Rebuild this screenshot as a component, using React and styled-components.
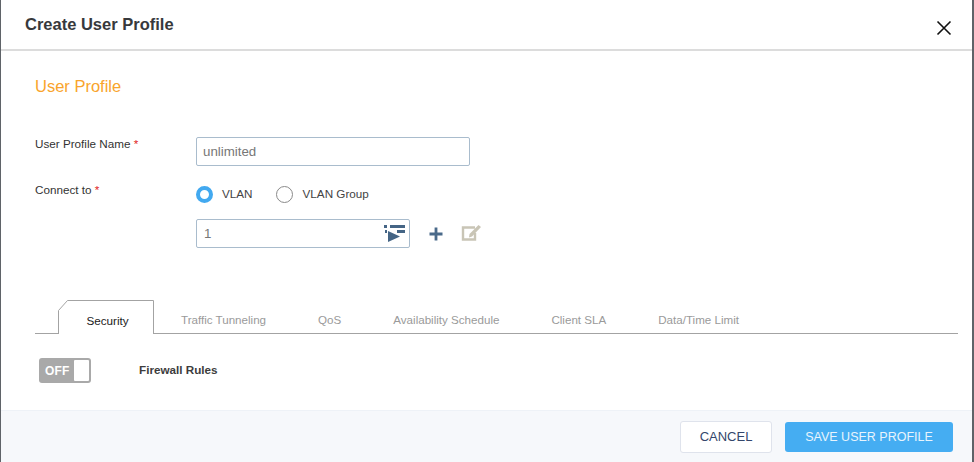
import React from "react";
import styled, { createGlobalStyle } from "styled-components";

const GlobalStyle = createGlobalStyle`
  html, body {
    margin: 0;
    padding: 0;
    background: #5f6368;
  }
  body {
    font-family: "Liberation Sans", Arial, sans-serif;
  }
`;

const Dialog = styled.div`
  width: 971px;
  height: 462px;
  margin-left: 1px;
  background: #fff;
  display: flex;
  flex-direction: column;
  overflow: hidden;
`;

const Header = styled.header`
  box-sizing: border-box;
  height: 51px;
  flex: none;
  border-bottom: 2px solid #dcdcdc;
  display: flex;
  align-items: center;
  justify-content: space-between;
  padding: 0 19px 0 24px;
`;

const Title = styled.h1`
  margin: 0;
  font-size: 16.5px;
  font-weight: 700;
  color: #37393c;
`;

const CloseButton = styled.button`
  border: none;
  background: none;
  padding: 0;
  width: 18px;
  height: 18px;
  margin-top: 6px;
  color: #111;
`;

const Body = styled.main`
  flex: 1;
  padding: 26px 0 0 34px;
`;

const SectionTitle = styled.h2`
  margin: 0 0 42px;
  font-size: 16.5px;
  line-height: 18px;
  font-weight: 400;
  color: #f9a42c;
`;

const Row = styled.div`
  display: flex;
  align-items: ${({ $top }) => ($top ? "flex-start" : "center")};
  margin-bottom: ${({ $gap }) => $gap || 0}px;
  padding-left: ${({ $indent }) => $indent || 0}px;
`;

const Label = styled.label`
  width: 161px;
  font-size: 11.7px;
  line-height: 14px;
  color: #333;
  flex: none;

  b {
    color: #e02020;
    font-weight: 400;
  }
`;

const TextInput = styled.div`
  position: relative;
  box-sizing: border-box;
  width: ${({ $w }) => $w}px;
  height: 29px;
  border: 1px solid #a9bccd;
  border-radius: 2px;
  padding-left: ${({ $pad }) => $pad}px;
  font-size: 13.3px;
  line-height: 27px;
  color: #777;
`;

const RadioGroup = styled.div`
  display: flex;
  align-items: center;
  margin-top: 3px;
  font-size: 11.7px;
  color: #444;
`;

const Radio = styled.span`
  box-sizing: border-box;
  width: 17px;
  height: 17px;
  border-radius: 50%;
  flex: none;
  margin-right: ${({ $on }) => ($on ? 9 : 10)}px;
  background: #fff;
  border: ${({ $on }) => ($on ? "4.5px solid #42a9f0" : "1px solid #8a8a8a")};
`;

const RadioText = styled.span`
  margin-right: ${({ $last }) => ($last ? 0 : 23)}px;
  padding-bottom: 2px;
`;

const ListIcon = styled.svg`
  position: absolute;
  right: 4px;
  top: 5px;
`;

const IconSlot = styled.span`
  display: flex;
  margin-left: ${({ $ml }) => $ml}px;
  margin-top: ${({ $mt }) => $mt || 0}px;
`;

const Tabs = styled.nav`
  display: flex;
  align-items: flex-end;
  height: 33px;
  margin-right: 14px;
  border-bottom: 1px solid #a3a3a3;
  padding-left: 23px;
`;

const ActiveTab = styled.div`
  position: relative;
  width: 96px;
  height: 34px;
  margin-bottom: -1px;
  margin-right: 27px;
  flex: none;
  background: #fff;
  font-size: 11.7px;
  line-height: 42px;
  text-align: center;
  text-indent: 3px;
  color: #222;

  svg {
    position: absolute;
    left: 0;
    top: 0;
  }

  span {
    position: relative;
  }
`;

const Tab = styled.div`
  height: 33px;
  margin-right: 52px;
  font-size: 11.6px;
  line-height: 40px;
  color: #9a9a9a;
  white-space: nowrap;
`;

const ToggleRow = styled.div`
  display: flex;
  align-items: center;
  margin-top: 24px;
  padding-left: 4px;
`;

const Toggle = styled.div`
  box-sizing: border-box;
  width: 52px;
  height: 25px;
  border-radius: 3px;
  background: #a9a9a9;
  padding: 2px 2px 2px 6px;
  display: flex;
  align-items: center;
  justify-content: space-between;
  font-size: 12px;
  font-weight: 700;
  color: #fff;
  letter-spacing: 0.2px;

  i {
    display: block;
    width: 15px;
    height: 21px;
    border-radius: 1px;
    background: #fff;
  }
`;

const ToggleLabel = styled.span`
  margin: 0 0 3px 48px;
  font-size: 11.7px;
  font-weight: 700;
  color: #3d3d3d;
`;

const Footer = styled.footer`
  height: 52px;
  flex: none;
  box-sizing: border-box;
  background: #f6f8fb;
  border-top: 1px solid #eef2f7;
  display: flex;
  align-items: center;
  justify-content: flex-end;
  gap: 13px;
  padding: 0 19px 0 0;
`;

const Button = styled.button`
  box-sizing: border-box;
  height: ${({ $primary }) => ($primary ? 30 : 32)}px;
  width: ${({ $primary }) => ($primary ? 168 : 92)}px;
  border-radius: 3px;
  border: ${({ $primary }) => ($primary ? "none" : "1px solid #dfe3ec")};
  background: ${({ $primary }) => ($primary ? "#45adf2" : "#fff")};
  color: ${({ $primary }) => ($primary ? "#e8f4fd" : "#34466b")};
  font-family: inherit;
  font-size: ${({ $primary }) => ($primary ? 12.5 : 13)}px;
  padding: 0;
`;

export default function App() {
  return (
    <>
      <GlobalStyle />
      <Dialog>
        <Header>
          <Title>Create User Profile</Title>
          <CloseButton aria-label="Close">
            <svg width="18" height="18" viewBox="0 0 18 18">
              <path d="M2.5 2.5 L15.5 15.5 M15.5 2.5 L2.5 15.5" stroke="currentColor" strokeWidth="1.6" fill="none" />
            </svg>
          </CloseButton>
        </Header>
        <Body>
          <SectionTitle>User Profile</SectionTitle>
          <Row $top $gap={17}>
            <Label>
              User Profile Name <b>*</b>
            </Label>
            <TextInput $w={274} $pad={6}>unlimited</TextInput>
          </Row>
          <Row $top $gap={16}>
            <Label>
              Connect to <b>*</b>
            </Label>
            <RadioGroup>
              <Radio $on />
              <RadioText>VLAN</RadioText>
              <Radio />
              <RadioText $last>VLAN Group</RadioText>
            </RadioGroup>
          </Row>
          <Row $indent={161} $gap={52}>
            <TextInput $w={214} $pad={7}>
              1
              <ListIcon width="21" height="17" viewBox="0 0 21 17">
                <g fill="#456585">
                  <rect x="0" y="0" width="3" height="3" />
                  <rect x="6" y="0" width="15" height="3" />
                  <rect x="1" y="5" width="2" height="3" />
                  <rect x="13" y="5" width="8" height="3" />
                  <path d="M4 6 L4 17 L16 11.5 Z" />
                </g>
              </ListIcon>
            </TextInput>
            <IconSlot $ml={19}>
              <svg width="14" height="14" viewBox="0 0 14 14">
                <path d="M5.6 0.5 H8.4 V5.6 H13.5 V8.4 H8.4 V13.5 H5.6 V8.4 H0.5 V5.6 H5.6 Z" fill="#4a6a8a" />
              </svg>
            </IconSlot>
            <IconSlot $ml={18} $mt={-2}>
              <svg width="21" height="17" viewBox="0 0 21 17">
                <path d="M14 3.5 H2 V15.5 H14 V9" stroke="#c9c5b6" strokeWidth="2.4" fill="none" />
                <path d="M8 13.5 L8.5 10 L17.5 1 L20 3 L11 12.5 Z" fill="#c9c5b6" />
              </svg>
            </IconSlot>
          </Row>
          <Tabs>
            <ActiveTab>
              <svg width="96" height="34" viewBox="0 0 96 34">
                <path d="M0.5 34 V10.5 L9.5 0.5 H95.5 V34" fill="none" stroke="#a3a3a3" />
              </svg>
              <span>Security</span>
            </ActiveTab>
            <Tab>Traffic Tunneling</Tab>
            <Tab>QoS</Tab>
            <Tab>Availability Schedule</Tab>
            <Tab>Client SLA</Tab>
            <Tab>Data/Time Limit</Tab>
          </Tabs>
          <ToggleRow>
            <Toggle>
              OFF
              <i />
            </Toggle>
            <ToggleLabel>Firewall Rules</ToggleLabel>
          </ToggleRow>
        </Body>
        <Footer>
          <Button>CANCEL</Button>
          <Button $primary>SAVE USER PROFILE</Button>
        </Footer>
      </Dialog>
    </>
  );
}
